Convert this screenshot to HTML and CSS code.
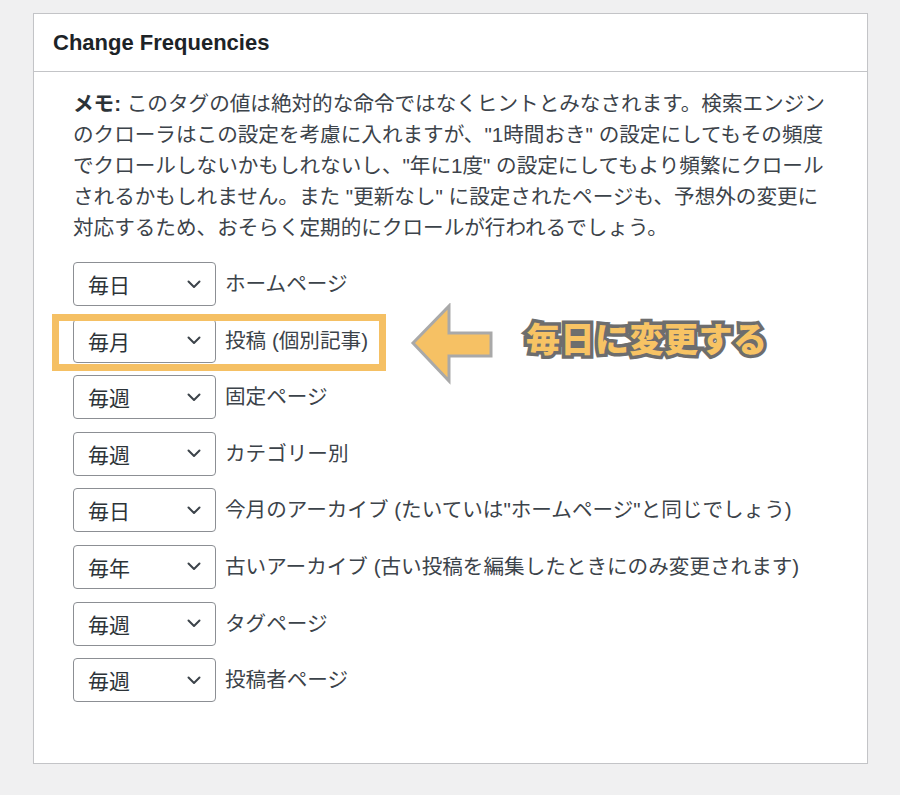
FILE: index.html
```html
<!DOCTYPE html>
<html lang="ja">
<head>
<meta charset="utf-8">
<title>Change Frequencies</title>
<link rel="stylesheet" href="styles.css">
</head>
<body>
<div class="postbox">
  <div class="postbox-header">
    <h2>Change Frequencies</h2>
  </div>
  <div class="inside">
    <p class="note"><b>メモ:</b> このタグの値は絶対的な命令ではなくヒントとみなされます。検索エンジン<br>のクローラはこの設定を考慮に入れますが、"1時間おき" の設定にしてもその頻度<br>でクロールしないかもしれないし、"年に1度" の設定にしてもより頻繁にクロール<br>されるかもしれません。また "更新なし" に設定されたページも、予想外の変更に<br>対応するため、おそらく定期的にクロールが行われるでしょう。</p>
    <ul class="freq-list">
      <li class="row"><span class="select">毎日<svg class="chev" viewBox="0 0 14 9"><polyline points="1.5,1.5 7,7 12.5,1.5"/></svg></span><span class="label">ホームページ</span></li>
      <li class="row row-hl"><span class="select">毎月<svg class="chev" viewBox="0 0 14 9"><polyline points="1.5,1.5 7,7 12.5,1.5"/></svg></span><span class="label">投稿 (個別記事)</span><span class="hl-box"></span></li>
      <li class="row"><span class="select">毎週<svg class="chev" viewBox="0 0 14 9"><polyline points="1.5,1.5 7,7 12.5,1.5"/></svg></span><span class="label">固定ページ</span></li>
      <li class="row"><span class="select">毎週<svg class="chev" viewBox="0 0 14 9"><polyline points="1.5,1.5 7,7 12.5,1.5"/></svg></span><span class="label">カテゴリー別</span></li>
      <li class="row"><span class="select">毎日<svg class="chev" viewBox="0 0 14 9"><polyline points="1.5,1.5 7,7 12.5,1.5"/></svg></span><span class="label">今月のアーカイブ (たいていは"ホームページ"と同じでしょう)</span></li>
      <li class="row"><span class="select">毎年<svg class="chev" viewBox="0 0 14 9"><polyline points="1.5,1.5 7,7 12.5,1.5"/></svg></span><span class="label">古いアーカイブ (古い投稿を編集したときにのみ変更されます)</span></li>
      <li class="row"><span class="select">毎週<svg class="chev" viewBox="0 0 14 9"><polyline points="1.5,1.5 7,7 12.5,1.5"/></svg></span><span class="label">タグページ</span></li>
      <li class="row"><span class="select">毎週<svg class="chev" viewBox="0 0 14 9"><polyline points="1.5,1.5 7,7 12.5,1.5"/></svg></span><span class="label">投稿者ページ</span></li>
    </ul>
    <svg class="callout-arrow" viewBox="0 0 84 82" width="84" height="82">
      <path d="M3 40 L39 3 L39 30 L81 30 L81 53 L39 53 L39 78 Z"/>
    </svg>
    <div class="callout-text">毎日に変更する</div>
  </div>
</div>
</body>
</html>
```

FILE: styles.css
```css
* { box-sizing: border-box; }

html, body {
  margin: 0;
  padding: 0;
}

body {
  background: #f0f0f1;
  padding: 13px 0 0 33px;
  font-family: "Liberation Sans", Arial, "Noto Sans CJK JP", sans-serif;
  color: #3c434a;
}

.postbox {
  width: 835px;
  height: 751px;
  background: #fff;
  border: 1px solid #c3c4c7;
  box-shadow: 0 1px 1px rgba(0, 0, 0, 0.04);
}

.postbox-header {
  height: 58px;
  border-bottom: 1px solid #c3c4c7;
  display: flex;
  align-items: center;
  padding-left: 19px;
}

.postbox-header h2 {
  margin: 0;
  font-size: 22px;
  font-weight: 700;
  color: #1d2327;
  line-height: 1;
}

.inside {
  position: relative;
  padding: 16px 20px 0 39px;
}

.note {
  margin: 0;
  font-size: 20.6px;
  line-height: 31px;
  color: #3c434a;
  white-space: nowrap;
}

.note b {
  color: #2c3338;
}

.freq-list {
  list-style: none;
  margin: 19px 0 0;
  padding: 0;
  display: flex;
  flex-direction: column;
  gap: 12.6px;
}

.row {
  position: relative;
  display: flex;
  align-items: center;
  height: 44px;
}

.select {
  display: flex;
  align-items: center;
  justify-content: space-between;
  width: 143px;
  height: 44px;
  border: 1px solid #8c8f94;
  border-radius: 4px;
  padding: 0 14px 0 14px;
  font-size: 21px;
  color: #2c3338;
  background: #fff;
}

.chev {
  width: 14px;
  height: 9px;
  fill: none;
  stroke: #3c434a;
  stroke-width: 2;
  stroke-linecap: round;
  stroke-linejoin: round;
}

.label {
  margin-left: 9px;
  font-size: 20.6px;
  color: #3c434a;
  position: relative;
  top: -2px;
  white-space: nowrap;
}

.hl-box {
  position: absolute;
  left: -21px;
  top: -5px;
  width: 334px;
  height: 57px;
  border: 7px solid #f5c064;
  pointer-events: none;
}

.callout-arrow {
  position: absolute;
  left: 376px;
  top: 231px;
}

.callout-arrow path {
  fill: #f6c164;
  stroke: #a9a9a9;
  stroke-width: 3;
  stroke-linejoin: miter;
}

.callout-text {
  position: absolute;
  left: 492px;
  top: 246px;
  font-family: "Noto Sans CJK JP", sans-serif;
  font-weight: 900;
  font-size: 34px;
  line-height: 40px;
  letter-spacing: 0.5px;
  color: #f7c364;
  -webkit-text-stroke: 7px #6e6e6e;
  paint-order: stroke fill;
  text-shadow: 0 0 2px rgba(110, 110, 110, 0.4);
  white-space: nowrap;
}
```
